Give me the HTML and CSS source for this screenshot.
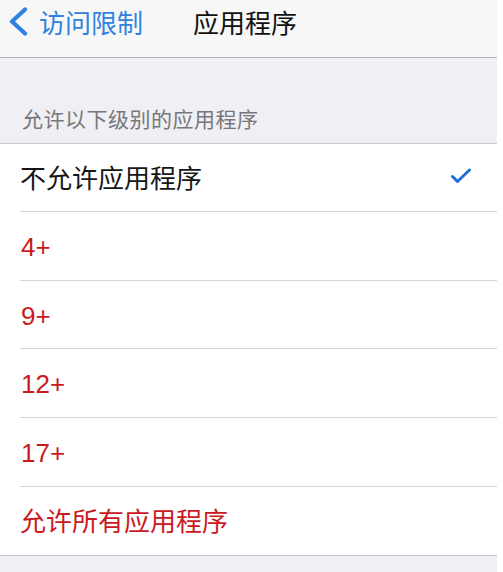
FILE: index.html
```html
<!DOCTYPE html>
<html lang="zh-CN">
<head>
<meta charset="utf-8">
<title>应用程序</title>
<link rel="stylesheet" href="styles.css">
</head>
<body>
<div class="screen">
  <header class="navbar">
    <a class="back">
      <svg class="chevron" width="20" height="29" viewBox="0 0 20 29"><path d="M17 2.5 L4 14.5 L17 26.5" fill="none" stroke="currentColor" stroke-width="4.2" stroke-linecap="round" stroke-linejoin="round"/></svg>
      <span>访问限制</span>
    </a>
    <h1 class="title">应用程序</h1>
  </header>
  <section class="group">
    <div class="group-header">允许以下级别的应用程序</div>
    <ul class="list">
      <li class="row row-first"><span class="label">不允许应用程序</span>
        <svg class="check" width="22" height="16" viewBox="0 0 22 16"><path d="M2.5 8.5 L7.5 13.5 L19.5 2" fill="none" stroke="currentColor" stroke-width="3" stroke-linecap="round" stroke-linejoin="round"/></svg>
      </li>
      <li class="row"><span class="label red num">4+</span></li>
      <li class="row"><span class="label red num">9+</span></li>
      <li class="row"><span class="label red num">12+</span></li>
      <li class="row"><span class="label red num">17+</span></li>
      <li class="row row-last"><span class="label red">允许所有应用程序</span></li>
    </ul>
  </section>
</div>
</body>
</html>
```

FILE: styles.css
```css
html, body {
  margin: 0;
  padding: 0;
  background: #ffffff;
}

body {
  font-family: "Liberation Sans", "Noto Sans CJK SC", sans-serif;
  height: 572px;
  overflow: hidden;
}

.screen {
  width: 497px;
  background: #efeff4;
  min-height: 572px;
}

/* top navigation bar */
.navbar {
  height: 58px;
  box-sizing: border-box;
  background: #f7f7f7;
  border-bottom: 1px solid #b4b4b6;
  display: flex;
  align-items: center;
  padding-bottom: 14px;
}

.back {
  display: flex;
  align-items: center;
  color: #2f83de;
  font-size: 26px;
  padding-left: 8px;
  gap: 11px;
}

.chevron {
  display: block;
}

.title {
  margin: 0 0 0 50px;
  font-size: 26px;
  font-weight: 400;
  color: #111111;
}

/* grouped list */
.group-header {
  height: 85px;
  box-sizing: border-box;
  padding: 45px 0 0 22px;
  font-size: 21px;
  color: #77777b;
  letter-spacing: 0.5px;
}

.list {
  list-style: none;
  margin: 0;
  padding: 0;
  background: #ffffff;
  border-top: 1px solid #c8c7cc;
  border-bottom: 1px solid #c8c7cc;
}

.row {
  height: 68.7px;
  display: flex;
  align-items: center;
  justify-content: space-between;
  margin-left: 20px;
  padding-right: 24px;
  box-sizing: border-box;
  border-bottom: 1px solid #d6d5da;
}

.row-first {
  height: 68px;
}

.row-last {
  border-bottom: none;
  height: 68px;
}

.label {
  font-size: 26px;
  color: #161616;
  padding-bottom: 2px;
}

.num {
  padding-bottom: 0;
  padding-top: 3px;
  padding-left: 1px;
}

.red {
  color: #cc1820;
}

.check {
  color: #1f6fd6;
  margin-top: -4px;
  margin-right: 1px;
}
```
